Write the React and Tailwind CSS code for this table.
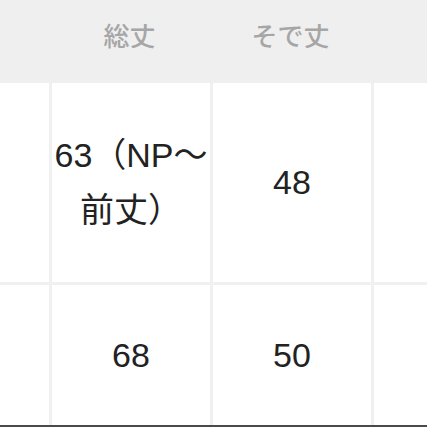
import React from 'react';

const font = { fontFamily: '"Liberation Sans", "Noto Sans CJK JP", sans-serif' };

const headers = ['', '総丈', 'そで丈', ''];

const rows = [
  { h: 'h-[202px] border-b-[3px] border-[#f0f0f0]', cells: ['', ['63（NP～', '前丈）'], ['48'], ''] },
  { h: 'h-[142px] border-b-2 border-[#4a4a4a]', cells: ['', ['68'], ['50'], ''] },
];

const colW = ['w-[49px]', 'w-[161px]', 'w-[161px]', 'flex-1'];

export default function App() {
  return (
    <div className="w-[427px] h-[427px] overflow-hidden bg-white" style={font}>
      <div className="flex h-[83px] bg-[#efefef]">
        {headers.map((t, i) => (
          <div key={i} className={`${colW[i]} flex items-center justify-center pb-[9px] text-[26px] font-medium leading-none text-[#a6a6a6]`}>
            {t}
          </div>
        ))}
      </div>
      {rows.map((r, ri) => (
        <div key={ri} className={`flex ${r.h}`}>
          {r.cells.map((c, ci) => (
            <div
              key={ci}
              className={`${colW[ci]} flex flex-col items-center justify-center text-[34px] leading-[55px] text-[#222222] ${ci > 0 ? 'border-l-[3px] border-[#f0f0f0]' : ''}`}
            >
              {Array.isArray(c) && c.map((line, li) => <span key={li}>{line}</span>)}
            </div>
          ))}
        </div>
      ))}
    </div>
  );
}
